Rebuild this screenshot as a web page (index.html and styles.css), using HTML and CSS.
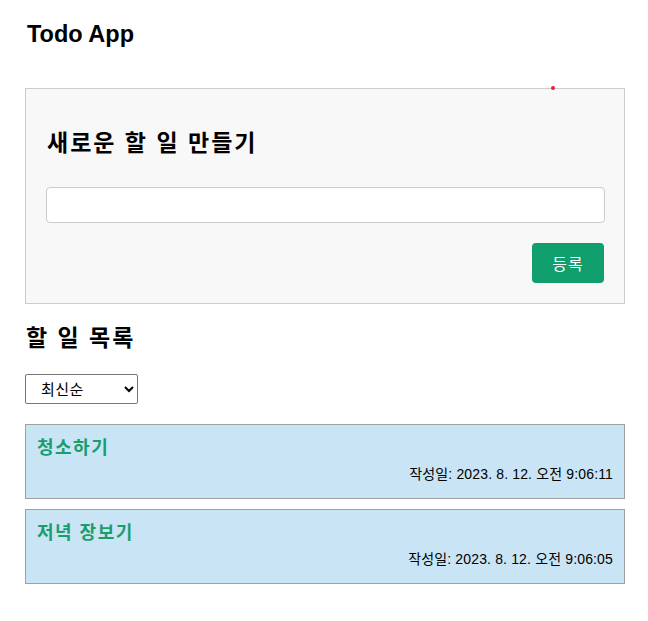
FILE: index.html
```html
<!DOCTYPE html>
<html lang="ko">
<head>
<meta charset="utf-8">
<title>Todo App</title>
<link rel="stylesheet" href="styles.css">
</head>
<body>
<div class="app">
  <h1 class="app-title">Todo App</h1>
  <section class="form-box">
    <span class="dot"></span>
    <h2 class="form-title">새로운 할 일 만들기</h2>
    <input class="todo-input" type="text">
    <div class="actions">
      <button class="submit-btn" type="button">등록</button>
    </div>
  </section>
  <h2 class="list-title">할 일 목록</h2>
  <select class="sort-select">
    <option>최신순</option>
    <option>오래된순</option>
  </select>
  <ul class="todo-list">
    <li class="todo-item">
      <div class="todo-name">청소하기</div>
      <div class="todo-date">작성일: 2023. 8. 12. 오전 9:06:11</div>
    </li>
    <li class="todo-item">
      <div class="todo-name">저녁 장보기</div>
      <div class="todo-date">작성일: 2023. 8. 12. 오전 9:06:05</div>
    </li>
  </ul>
</div>
</body>
</html>
```

FILE: styles.css
```css
html, body {
  margin: 0;
  padding: 0;
  background: #ffffff;
}

body {
  font-family: "Liberation Sans", "Noto Sans CJK KR", sans-serif;
  color: #000;
}

.app {
  width: 600px;
  padding: 20px 0 0 25px;
  display: flex;
  flex-direction: column;
  align-items: flex-start;
}

.app-title {
  margin: 0 0 0 2px;
  font-size: 23.5px;
  line-height: 28px;
  font-weight: bold;
}

.form-box {
  position: relative;
  box-sizing: border-box;
  width: 600px;
  margin-top: 40px;
  padding: 20px;
  background: #f8f8f8;
  border: 1px solid #cccccc;
  display: flex;
  flex-direction: column;
}

.dot {
  position: absolute;
  left: 525px;
  top: -3px;
  width: 4px;
  height: 4px;
  border-radius: 50%;
  background: #e8202a;
}

.form-title {
  margin: 18px 0 28px 1px;
  font-size: 23px;
  line-height: 32px;
  letter-spacing: 2px;
  font-weight: bold;
}

.todo-input {
  box-sizing: border-box;
  width: 559px;
  height: 36px;
  margin: 0;
  border: 1px solid #cccccc;
  border-radius: 4px;
  background: #fff;
  font-size: 14px;
  padding: 0 8px;
}

.actions {
  display: flex;
  justify-content: flex-end;
  margin-top: 20px;
}

.submit-btn {
  width: 72px;
  height: 40px;
  border: none;
  border-radius: 4px;
  background: #119e6d;
  color: #ffffff;
  font-family: "Liberation Sans", "Noto Sans CJK KR", sans-serif;
  font-size: 16px;
  letter-spacing: 1px;
  padding: 0;
}

.list-title {
  margin: 18px 0 0 1px;
  font-size: 23px;
  line-height: 32px;
  letter-spacing: 2px;
  font-weight: bold;
}

.sort-select {
  box-sizing: border-box;
  margin-top: 20px;
  width: 113px;
  height: 30px;
  padding: 0 8px 0 11px;
  border: 1px solid #767676;
  border-radius: 2px;
  background: #fff;
  font-family: "Liberation Sans", "Noto Sans CJK KR", sans-serif;
  font-size: 15px;
  letter-spacing: 0.5px;
  color: #000;
}

.todo-list {
  list-style: none;
  margin: 20px 0 0 0;
  padding: 0;
  width: 600px;
  display: flex;
  flex-direction: column;
  gap: 10px;
}

.todo-item {
  box-sizing: border-box;
  height: 75px;
  padding: 11px 11px 0 11px;
  background: #c8e4f5;
  border: 1px solid #a0a0a0;
  display: flex;
  flex-direction: column;
}

.todo-name {
  font-size: 18px;
  line-height: 24px;
  letter-spacing: 1.5px;
  font-weight: bold;
  color: #1a9d6d;
}

.todo-date {
  margin-top: 6px;
  font-size: 14px;
  line-height: 16px;
  letter-spacing: 0.15px;
  text-align: right;
}
```
